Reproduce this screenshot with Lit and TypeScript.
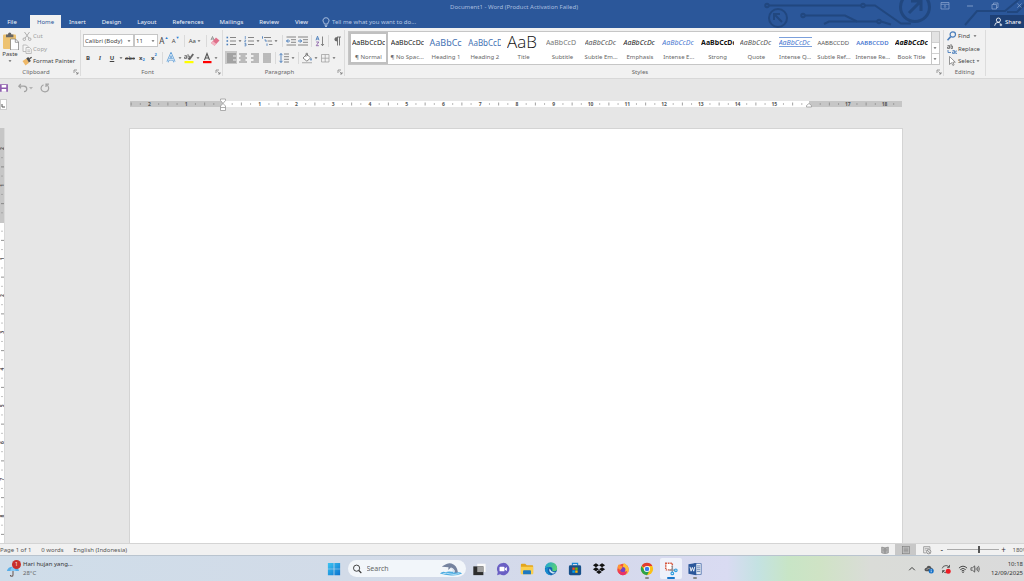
import { LitElement, html, svg, css, TemplateResult } from "lit";
import { customElement, state } from "lit/decorators.js";
import { classMap } from "lit/directives/class-map.js";

const icon = (body: TemplateResult, size = "i12", box = "0 0 12 12") =>
  html`<svg class=${size} viewBox=${box} aria-hidden="true">${body}</svg>`;

const G = "#6b6b6b";
const B = "#4a7ebb";

/* ---------- ribbon glyphs, 12 x 12 grid ---------- */
const lines = (x1: number[], x2: number[], ys: number[], c = G) =>
  ys.map((y, i) => svg`<path d="M${x1[i % x1.length]} ${y}H${x2[i % x2.length]}" stroke=${c} stroke-width="0.8"/>`);

const I = {
  cut: svg`<g fill="none" stroke="#a8a8a8" stroke-width="0.9"><path d="M3.5 2L8 8.3M8.5 2L4 8.3"/><circle cx="3.3" cy="9.2" r="1.3"/><circle cx="8.7" cy="9.2" r="1.3"/></g>`,
  copy: svg`<g fill="#f6f6f6" stroke="#b0b0b0" stroke-width="0.8"><path d="M2 2h3.5l1.5 1.5v5h-5z"/><path d="M5 4.5h3.5l1.8 1.7v4.3h-5.300z"/><path d="M6.300 7h2.700M6.300 8.700h2.700"/></g>`,
  painter: svg`<path d="M1.500 6l4-2.500 2.500 4.200-3.500 2.800z" fill="#eeb868"/><path d="M5.300 3.300l2-1.300 2.600 4-2 1.400z" fill="#4c4c4c"/><path d="M8.300 3.700l2.400-1.500" stroke="#4c4c4c" stroke-width="1.300"/>`,
  paste: svg`<rect x="1" y="2.500" width="13" height="14.500" rx="1" fill="#edc271"/><path d="M4 2.500h2q0-2 1.700-2t1.700 2h2v2.700H4z" fill="#666"/><path d="M8.500 7h5l3 3v8h-8z" fill="#fff" stroke="#777" stroke-width="0.700"/><path d="M13.300 7v3.300h3.200" fill="none" stroke="#777" stroke-width="0.700"/>`,
  eraser: svg`<path d="M2 8l5-5.500 3.500 3-5 5.200z" fill="#e0708a"/><path d="M2 8l1.800-2 3.600 3-1.900 1.700z" fill="#f3b4c2"/><path d="M2 5l1.500-3.500L5 5M2.500 4h2" stroke="#666" stroke-width="0.600" fill="none"/>`,
  bullets: svg`${[2.5, 6, 9.500].map((y) => svg`<rect x="1.500" y=${y - 0.8} width="1.600" height="1.600" fill=${B}/>`)}${lines([5], [11], [2.5, 6, 9.500])}`,
  numbers: svg`<path d="M2.300 1v3M1.500 5.200h1.500l-1.500 1.700h1.500M1.500 8.500h1.500v2.400h-1.500M1.700 9.700h1.300" stroke=${B} stroke-width="0.700" fill="none"/>${lines([5], [11], [2.5, 6, 9.500])}`,
  multi: svg`<path d="M1.500 1.300v2.400M3.500 5h1.500v2M6 8.500v2.300" stroke=${B} stroke-width="0.900" fill="none"/>${lines([3, 6.500, 8], [10, 11, 11.500], [2.5, 6, 9.500])}`,
  outdent: svg`${lines([1.500, 6, 6, 1.500], [11, 11, 11, 11], [2, 4.700, 7.300, 10])}<path d="M5 6H1.500M3.200 4.300L1.500 6l1.700 1.700" stroke=${B} stroke-width="1" fill="none"/>`,
  indent: svg`${lines([1, 6, 6, 1], [11, 11, 11, 11], [2, 4.700, 7.300, 10])}<path d="M1 6h3.700M3 4.300L4.700 6 3 7.700" stroke=${B} stroke-width="1" fill="none"/>`,
  sort: svg`<path d="M2 5.300L3.500 1.200 5 5.300M2.500 4h2" stroke=${B} stroke-width="0.900" fill="none"/><path d="M2.200 7h2.600l-2.600 3.700h2.700" stroke="#8b62a8" stroke-width="0.900" fill="none"/><path d="M8.500 1.500v9M7 9l1.500 1.700L10 9" stroke=${G} stroke-width="0.800" fill="none"/>`,
  pilcrow: svg`<path d="M6 2h4M6.500 2v8.500M8.500 2v8.500" stroke=${G} stroke-width="0.900"/><path d="M6.500 2Q3.500 2 3.500 4.200T6.500 6.400z" fill=${G}/>`,
  left: svg`${lines([2, 2], [11, 8], [2, 4, 6, 8, 10])}`,
  center: svg`${lines([2, 3.500], [10, 8.500], [2, 4, 6, 8, 10])}`,
  right: svg`${lines([2, 4.500], [10, 10], [2, 4, 6, 8, 10])}`,
  justify: svg`${lines([2], [10], [2, 4, 6, 8, 10])}`,
  spacing: svg`${lines([6], [11], [2, 4.700, 7.300, 10])}<path d="M3 1.500v9M1.500 3.200L3 1.500l1.500 1.700M1.500 8.800L3 10.500l1.500-1.700" stroke=${B} stroke-width="0.900" fill="none"/>`,
  shading: svg`<path d="M2 6l3.800-3.800 3.800 3.700-3.700 3.300z" fill="#fff" stroke=${G} stroke-width="0.800"/><path d="M5 5V1.300h1.500V4" stroke=${G} stroke-width="0.700" fill="none"/><path d="M10 5.500q1.500 2.500 0 3.200-1.400-.7 0-3.200z" fill=${B}/><path d="M1 10.700h10" stroke="#b5b5b5" stroke-width="1.200"/>`,
  borders: svg`<path d="M2.500 2.500h7.500v7.500h-7.500zM6.200 2.500v7.500M2.500 6.200h7.500" fill="none" stroke="#999" stroke-width="0.700"/>`,
  find: svg`<circle cx="6.800" cy="4.500" r="2.700" fill="none" stroke=${B} stroke-width="1.200"/><path d="M4.700 6.600L1.500 10.200" stroke=${B} stroke-width="1.600"/>`,
  select: svg`<path d="M3.500 1.500v8l2-1.800 1.400 2.800 1.200-.6-1.300-2.700h2.500z" fill="#fff" stroke=${G} stroke-width="0.700"/>`,
  bulb: svg`<path d="M4.300 8Q4.300 7 3.500 6 2.800 5 3 4 3.500 1.700 6 1.700T9 4q.2 1-.5 2-.8 1-.8 2zM4.600 9.300h2.800M5 10.500h2" fill="none" stroke="#c3d2ea" stroke-width="0.800"/>`,
  person: svg`<circle cx="6.500" cy="3.700" r="2.500" fill="none" stroke="#fff" stroke-width="1"/><path d="M2 10.500q.3-4 4-4 2 0 3 1.500M8 9.500h3M9.500 8v3" fill="none" stroke="#fff" stroke-width="1"/>`,
  save: svg`<path d="M0 1.500h9.500v9H0z" fill="#8e5cae"/><path d="M2 2.500h5.500v3H2zM2 7.300h5.500v3.200H2z" fill="#fff"/>`,
  undo: svg`<path d="M3.800 2L1.800 4.200 4 6.300M2 4.200h5q2.800.3 2.800 2.700T7 9.600" fill="none" stroke="#a3a3a3" stroke-width="1.200"/>`,
  redo: svg`<path d="M4.500 2.700Q2 4 2 6.300 2.400 9.800 6 9.900 9.600 9.500 9.700 6 9.500 3.600 7.500 2.700M7 5V2.200h3" fill="none" stroke="#a3a3a3" stroke-width="1.200"/>`,
  read: svg`<path d="M2 2.500l3.700.8v7L2 9.500zM10 2.500l-3.700.8v7l3.700-.8z" fill="#b8b8b8" stroke="#777" stroke-width="0.700"/><path d="M3 5h2M3 7h2M7 5h2M7 7h2" stroke="#666" stroke-width="0.500"/>`,
  print: svg`<rect x="2" y="2" width="8" height="8.500" fill="#c3c3c3" stroke="#777" stroke-width="0.700"/>${lines([3.200], [8.800], [3.700, 5.200, 6.700, 8.200], "#888")}`,
  web: svg`<path d="M2 2h7.500v3.500M2 2v7.500h3" fill="none" stroke="#888" stroke-width="0.900"/><path d="M3.300 4h5M3.300 6h2" stroke="#888" stroke-width="0.800"/><circle cx="8" cy="8" r="2.700" fill="#ddd" stroke="#777" stroke-width="0.800"/><path d="M6 6l4 4" stroke="#777" stroke-width="0.700"/>`,
};

/* ---------- taskbar glyphs, 16 x 16 grid ---------- */
const T = {
  start: svg`<defs><linearGradient id="ws" x1="0" y1="0" x2="1" y2="1"><stop offset="0" stop-color="#3ec5f2"/><stop offset="1" stop-color="#0a73cf"/></linearGradient></defs><path d="M1 1h6.600v6.600H1zM8.400 1H15v6.600H8.400zM1 8.400h6.600V15H1zM8.400 8.400H15V15H8.400z" fill="url(#ws)"/>`,
  tasks: svg`<rect x="6" y="2" width="9.500" height="9.500" fill="#fafafa"/><rect x="1.500" y="5" width="11.500" height="10" fill="#2d2d2d"/><path d="M6 5h7v6.500H6z" fill="#a3a3a3"/>`,
  chat: svg`<path d="M8 1a7 7 0 1 1-3.300 13L1.300 15l.7-3.500A7 7 0 0 1 8 1z" fill="#6a5fc4"/><rect x="4" y="5.300" width="5.700" height="5.400" rx="1" fill="#fff"/><path d="M10.200 7.300l2.200-1.500v4.500l-2.200-1.500z" fill="#fff"/>`,
  folder: svg`<path d="M1 3q0-1 1-1h4l1.700 1.700H14q1 0 1 1V13H1z" fill="#e3a51c"/><path d="M1 5.500h14V13q0 1-1 1H2q-1 0-1-1z" fill="#fbd04e"/><path d="M3.500 10.500q0-1 1-1h7q1 0 1 1V14h-9z" fill="#1d78c1"/>`,
  edge: svg`<defs><linearGradient id="eg" x1="0" y1="0" x2="1" y2="0.300"><stop offset="0" stop-color="#1ca0dc"/><stop offset="1" stop-color="#58d176"/></linearGradient></defs><circle cx="8" cy="8" r="7" fill="#1262b0"/><path d="M1 7.500A7 7 0 0 1 15 7q.2 3.500-3.500 3.500-2.500 0-2-1.500Q10 6 6.800 5.700 3 5.500 1 7.500z" fill="url(#eg)"/><path d="M6.500 7.500q-1.800 4 3 5.500 2.500.5 4.300-.8-2-.2-3.300-.8-3-1-4-3.900z" fill="#d5e8f4"/><path d="M6.500 6q-3 1.500-2 5 1 3.300 4.500 4Q2.300 15.200 1 9 2 6 6.500 6z" fill="#178bce"/>`,
  store: svg`<path d="M5 4V1.500h6V4" fill="none" stroke="#1a8ad6" stroke-width="1.300"/><rect x="1" y="3.700" width="14" height="11.300" rx="1.700" fill="#17508a"/><path d="M5 6.300h2.700V9H5z" fill="#f25022"/><path d="M8.300 6.300H11V9H8.300z" fill="#7fba00"/><path d="M5 9.600h2.700v2.700H5z" fill="#00a4ef"/><path d="M8.300 9.600H11v2.700H8.300z" fill="#ffb900"/>`,
  dropbox: svg`<path d="M4.500 1.500L8 3.800 4.500 6 1 3.800zM11.500 1.500L15 3.800 11.500 6 8 3.800zM4.500 6L8 8.300l-3.500 2.300L1 8.300zM11.500 6L15 8.300l-3.500 2.300L8 8.300zM4.700 11.300L8 9.200l3.300 2.100L8 13.700z" fill="#111"/>`,
  firefox: svg`<circle cx="8" cy="8.500" r="6.500" fill="#f5503a"/><path d="M9 1q5 2.500 5.600 7.500.2 4-3.600 6 .7-4-2-6.500Q7 5 9 1z" fill="#ffc23a"/><circle cx="7.800" cy="8.700" r="3" fill="#7440c2"/><path d="M1.700 6q.5-2.500 2-3.700.3 2 2.800 2.400Q8 5.300 7 7q-1.700.5-1.500 2.200Q3 9 1.700 6z" fill="#ff9537"/><path d="M1.500 9q2 3 6 3t5.500-2.300Q12 15 8 15T1.500 9z" fill="#e8306a"/>`,
  chrome: svg`<circle cx="8" cy="8" r="7" fill="#fbc116"/><path d="M8 8L1.900 4.500A7 7 0 0 1 14.100 4.500L8 4.700z" fill="#e33b2e"/><path d="M1.900 4.500A7 7 0 0 0 8 15l3-5.200H5z" fill="#2ba24c"/><circle cx="8" cy="8" r="3.500" fill="#fff"/><circle cx="8" cy="8" r="2.600" fill="#3b7de9"/>`,
  snip: svg`<rect x="2" y="1.500" width="7.500" height="7.500" fill="#fff" stroke="#d5553c" stroke-width="1.700" stroke-dasharray="1.700 0.900"/><path d="M9.500 4v7.500M6 9.300h7" stroke="#8d949b" stroke-width="1.500"/><circle cx="13.500" cy="9.500" r="1.500" fill="none" stroke="#2f9fe0" stroke-width="1.300"/><circle cx="9.500" cy="13" r="1.500" fill="none" stroke="#2f9fe0" stroke-width="1.300"/>`,
  word: svg`<rect x="7" y="2" width="8" height="12" fill="#fff" stroke="#2b579a" stroke-width="0.800"/><path d="M10 4.500h4M10 6.700h4M10 8.900h4M10 11.100h4" stroke="#2b579a" stroke-width="0.900"/><path d="M0.500 2.500L9.500 1v14L0.500 13.500z" fill="#2b579a"/><path d="M2.300 5.500l1.200 5 1.500-4.300 1.500 4.300 1.200-5" fill="none" stroke="#fff" stroke-width="1"/>`,
  weather: svg`<path d="M1 8Q2 3 8 3t7 5z" fill="#58aee8"/><path d="M5 8Q5.500 3.500 8 3q2.500.5 3 5z" fill="#86c9f5"/><path d="M8 8v4.500q0 1.500-1.500 1.500T5 12.500" fill="none" stroke="#6c5a55" stroke-width="1.200"/>`,
  up: svg`<path d="M3.500 10L8 5.500l4.500 4.500" fill="none" stroke="#333" stroke-width="1.500"/>`,
  cloud: svg`<path d="M3 11.500Q.5 11 .8 8.500 1.500 6 4 6 5 2.500 8 2.700q3.500.3 4 3.800Q15 7 15 9.500t-2.500 2z" fill="#555"/><path d="M4 9q3-3 6-1" stroke="#ccc" fill="none"/><circle cx="11.500" cy="11" r="4" fill="#1471c9"/><path d="M11.500 10.300v3M11.500 8.300v1.200" stroke="#fff" stroke-width="1.200"/>`,
  sync: svg`<path d="M2 7q1-4.500 6-4.500 3 0 5 2.500M13.500 1.500V5.300H9.700M2.500 10.500v3.800M2.500 10.500h3.500M3 11q2 3 5 3" fill="none" stroke="#333" stroke-width="1.200"/><circle cx="11.500" cy="11.500" r="4" fill="#ed1c24"/>`,
  wifi: svg`<path d="M1.500 6.500Q8 0.500 14.500 6.500M3.700 9Q8 5 12.300 9M5.800 11.200Q8 9.200 10.200 11.200" fill="none" stroke="#333" stroke-width="1.400"/><circle cx="8" cy="13" r="1.200" fill="#333"/>`,
  volume: svg`<path d="M1.500 6H4l3.500-3v10L4 10H1.500z" fill="none" stroke="#333" stroke-width="1.100"/><path d="M9.500 6q1.200 2 0 4M11.500 4.500q2.300 3.500 0 7M13.500 3q3 5 0 10" fill="none" stroke="#333" stroke-width="1"/>`,
};

const TABS = ["Home", "Insert", "Design", "Layout", "References", "Mailings", "Review", "View"];

const STYLES: [string, string, string][] = [
  ["AaBbCcDc", "¶ Normal", ""],
  ["AaBbCcDc", "¶ No Spac...", ""],
  ["AaBbCc", "Heading 1", "h1"],
  ["AaBbCcD", "Heading 2", "h2"],
  ["AaB", "Title", "title"],
  ["AaBbCcD", "Subtitle", "sub"],
  ["AaBbCcDc", "Subtle Em...", "it grey"],
  ["AaBbCcDc", "Emphasis", "it"],
  ["AaBbCcDc", "Intense E...", "it blue"],
  ["AaBbCcDc", "Strong", "bold"],
  ["AaBbCcDc", "Quote", "it grey"],
  ["AaBbCcDc", "Intense Q...", "it blue ruled"],
  ["AABBCCDD", "Subtle Ref...", "caps grey"],
  ["AABBCCDD", "Intense Re...", "caps blue strong"],
  ["AaBbCcDc", "Book Title", "it bold"],
];

const APPS: [string, TemplateResult, string][] = [
  ["Task view", T.tasks, ""],
  ["Chat", T.chat, ""],
  ["File Explorer", T.folder, ""],
  ["Edge", T.edge, ""],
  ["Store", T.store, ""],
  ["Dropbox", T.dropbox, ""],
  ["Firefox", T.firefox, ""],
  ["Chrome", T.chrome, "open"],
  ["Snipping Tool", T.snip, "active"],
  ["Word", T.word, "open"],
];

const reset = css`
  :host, * { box-sizing: border-box; }
  button, input, select, textarea {
    font: inherit; color: inherit; background: none; border: 0; padding: 0; margin: 0;
    border-radius: 0; outline: 0; appearance: none; min-width: 0;
  }
  button { display: flex; align-items: center; justify-content: center; white-space: nowrap; }
  svg { display: block; flex: none; }
  .i12 { width: 12px; height: 12px; }
  .i10 { width: 10px; height: 10px; }
`;

@customElement("word-titlebar")
class WordTitlebar extends LitElement {
  @state() tab = "Home";
  static styles = [reset, css`
    :host { display: block; position: relative; background: #2b579a; color: #fff; overflow: hidden; }
    .art { position: absolute; right: 0; top: 0; width: 264px; height: 28px; }
    .top { display: flex; height: 14px; align-items: center; justify-content: center; color: #a9bedf; position: relative; }
    .title { padding-left: 4px; line-height: 12px; }
    .win { position: absolute; right: 0; top: 0; display: flex; gap: 13px; }
    .tabs { display: flex; height: 14px; position: relative; align-items: stretch; padding-top: 1px; }
    .tabs button { padding: 0 8px; color: #f0f4fb; }
    .tabs .file { width: 30px; padding: 0 6px 0 0; }
    .tabs .on { background: #f1f1f1; color: #2b579a; padding: 0 7px; }
    .tell { display: flex; align-items: center; color: #b8c9e5; margin-left: 4px; flex: 1; }
    .tell input { width: 100px; }
    .tell input::placeholder { color: #b8c9e5; opacity: 1; }
    .tabs .share { background: #1e4075; color: #fff; padding: 0 3px; width: 34px; gap: 2px; }
  `];
  render() {
    return html`
      <svg class="art" viewBox="0 0 264 28" aria-hidden="true">
        <g fill="none" stroke="#21477f" stroke-width="2">
          <circle cx="18" cy="18" r="9"/><path d="M22 22l-7-7M14 20v-6h6"/>
          <circle cx="7" cy="5.500" r="1.700"/><path d="M9 5.500h92M105 5.500h10l26 18h10"/><circle cx="103" cy="5.500" r="1.700"/>
          <circle cx="43" cy="15.500" r="1.700"/><path d="M45 15.500h40l12 6h20"/><circle cx="119" cy="21.500" r="1.700"/><path d="M64 24l5-2.500h28M121 21.500l10 3"/>
          <circle cx="155" cy="7" r="14.500" stroke-width="3"/><path d="M149 13l12-12M151 1h10v10" stroke-width="3"/>
          <path d="M205 25l12-14h28l17-14M247 12h10l8-8"/>
        </g>
      </svg>
      <div class="top">
        <span class="title">Document1 - Word (Product Activation Failed)</span>
        <div class="win">
          <button aria-label="Ribbon display options">${icon(svg`<path d="M2 2.500h8v6.500H2zM2 4.300h8M6 8V5.500M5 6.500l1-1 1 1" fill="none" stroke="#8fa9d2" stroke-width="0.700"/>`)}</button>
          <button aria-label="Minimize">${icon(svg`<path d="M3 6h6" stroke="#8fa9d2" stroke-width="0.800"/>`)}</button>
          <button aria-label="Restore">${icon(svg`<path d="M3 4.500h4.500V9H3zM4.500 4.500V3H9v4.500H7.500" fill="none" stroke="#8fa9d2" stroke-width="0.700"/>`)}</button>
          <button aria-label="Close">${icon(svg`<path d="M4 3l5 5M9 3L4 8" stroke="#8fa9d2" stroke-width="0.800"/>`, "i10")}</button>
        </div>
      </div>
      <nav class="tabs">
        <button class="file">File</button>
        ${TABS.map((t) => html`<button class=${classMap({ on: t === this.tab })} @click=${() => (this.tab = t)}>${t}</button>`)}
        <label class="tell">${icon(I.bulb, "i12")}<input aria-label="Tell me" placeholder="Tell me what you want to do..." /></label>
        <button class="share">${icon(I.person, "i10")}Share</button>
      </nav>`;
  }
}

@customElement("word-ribbon")
class WordRibbon extends LitElement {
  @state() picked = 0;
  static styles = [reset, css`
    :host { display: flex; height: 51px; background: #f1f1f1; border-bottom: 1px solid #d8d8d8; color: #444; padding: 2px 0; }
    .group { display: flex; flex-direction: column; border-right: 1px solid #dcdcdc; flex: none; }
    .foot { display: flex; align-items: center; height: 9px; color: #666; }
    .foot span { flex: 1; text-align: center; }
    .foot button { width: 8px; height: 8px; }
    .body { flex: 1; display: flex; min-height: 0; }
    .clip { width: 81px; }
    .paste { width: 20px; flex-direction: column; justify-content: flex-start; padding: 2px 0 0 0; line-height: 8px; }
    .paste svg { width: 17px; height: 18px; }
    .paste .dd { width: 6px; height: 6px; }
    .stack { display: flex; flex-direction: column; padding: 0 1px; justify-content: space-between; }
    .stack button { justify-content: flex-start; height: 12px; }
    .off { color: #a0a0a0; }
    .rows { flex-direction: column; padding: 4px 1px 0 1px; gap: 4px; }
    .row { display: flex; align-items: center; height: 13px; }
    .row button { width: 12px; height: 13px; }
    .row .ar { width: 6px; }
    .row .wide { width: 18px; }
    .row .on { background: #c8c8c8; }
    .font { width: 142px; }
    .para { width: 122px; }
    .para .rows { padding-left: 2px; }
    .sep { width: 1px; height: 12px; background: #dadada; margin: 0 2px; }
    .sep.far { margin: 0 2px 0 3px; }
    .combo { display: flex; align-items: center; height: 13px; background: #fff; border: 1px solid #c6c6c6; position: relative; flex: none; }
    .combo select { width: 100%; height: 11px; padding: 0 8px 0 1px; }
    .combo .dd { position: absolute; right: 1px; top: 3px; pointer-events: none; }
    .face { width: 51px; margin-left: 1px; } .size { width: 24px; }
    .dd { width: 6px; height: 6px; }
    .big { font-size: 8px; } .b { font-weight: 700; } .i { font-style: italic; font-family: "Liberation Serif", serif; font-weight: 700; }
    .u { text-decoration: underline; font-weight: 700; } .s { text-decoration: line-through; }
    sup, sub { font-size: 4px; line-height: 4px; color: #2b7cd3; }
    sup { align-self: flex-start; padding-top: 2px; } sub { align-self: flex-end; padding-bottom: 2px; }
    .sty { flex: 1; min-width: 0; }
    .sty .body { padding: 1px 3px 4px; }
    .gallery { display: flex; flex: 1; min-width: 0; height: 34px; background: #fff; border: 1px solid #c6c6c6; }
    .cell { flex: 1; flex-direction: column; overflow: hidden; padding: 1px; color: #666; justify-content: space-between; }
    .cell.sel { outline: 2px solid #c0c0c0; outline-offset: -2px; }
    .prev { width: 33px; height: 20px; line-height: 20px; overflow: hidden; text-align: left; font-size: 7px; color: #222; white-space: nowrap; }
    .name { line-height: 12px; }
    .h1 { font-size: 9px; color: #4472b4; } .h2 { font-size: 8px; color: #4472b4; }
    .title { font-size: 17px; color: #111; line-height: 17px; font-weight: 300; font-family: "Open Sans", sans-serif; }
    .sub { color: #777; }
    .it { font-style: italic; } .grey { color: #555; } .blue { color: #4a78d0; } .bold { font-weight: 700; color: #111; } .strong { font-weight: 600; }
    .caps { font-size: 6px; }
    .ruled { border: solid #7ba0dc; border-width: 1px 0; height: 12px; line-height: 10px; margin: 4px 0; }
    .scroll { width: 8px; display: flex; flex-direction: column; border-left: 1px solid #c6c6c6; }
    .scroll button { flex: 1; border-bottom: 1px solid #d0d0d0; }
    .scroll button:first-child { background: #e3e3e3; }
    .scroll button:last-child { border: 0; }
    .edit { width: 42px; } .edit .stack { padding: 0 2px; }
    .rest { width: 38px; flex: none; }
  `];
  dd() { return html`<svg class="dd" viewBox="0 0 6 6" aria-hidden="true"><path d="M1.500 2.200h3L3 3.900z" fill="#666"/></svg>`; }
  ar(l: string) { return html`<button class="ar" aria-label="${l} options">${this.dd()}</button>`; }
  bt(l: string, b: TemplateResult, c = "") { return html`<button class=${c} aria-label=${l}>${icon(b)}</button>`; }
  foot(l: string, launch = true) {
    return html`<div class="foot"><span>${l}</span>${launch
      ? html`<button aria-label="${l} settings"><svg width="6" height="6" viewBox="0 0 6 6"><path d="M1 4V1h3M2.500 2.500L5 5M5 3v2H3" fill="none" stroke="#777" stroke-width="0.700"/></svg></button>` : ""}</div>`;
  }
  render() {
    return html`
      <section class="group clip">
        <div class="body">
          <button class="paste">${icon(I.paste, "", "0 0 17 18")}<span>Paste</span>${this.dd()}</button>
          <div class="stack">
            <button class="off">${icon(I.cut)}Cut</button>
            <button class="off">${icon(I.copy)}Copy</button>
            <button>${icon(I.painter)}Format Painter</button>
          </div>
        </div>${this.foot("Clipboard")}
      </section>
      <section class="group font">
        <div class="body rows">
          <div class="row">
            <label class="combo face"><select aria-label="Font"><option>Calibri (Body)</option></select>${this.dd()}</label>
            <label class="combo size"><select aria-label="Font size"><option>11</option></select>${this.dd()}</label>
            <button class="big" aria-label="Grow font">A<sup>▲</sup></button>
            <button aria-label="Shrink font">A<sup>▼</sup></button>
            <i class="sep"></i>
            <button class="wide" aria-label="Change case">Aa${this.dd()}</button>
            <i class="sep"></i>
            ${this.bt("Clear formatting", I.eraser)}
          </div>
          <div class="row">
            <button class="b">B</button><button class="i">I</button><button class="u">U</button>${this.ar("Underline")}
            <button class="s">abc</button>
            <button class="b">x<sub>2</sub></button><button class="b">x<sup>2</sup></button>
            <i class="sep"></i>
            ${this.bt("Text effects", svg`<path d="M2.500 10L6 2l3.500 8M4 7.500h4" fill="none" stroke="#5b9bd5" stroke-width="2.200"/><path d="M2.500 10L6 2l3.500 8M4 7.500h4" fill="none" stroke="#fff" stroke-width="0.700"/>`)}${this.ar("Effects")}
            ${this.bt("Highlight", svg`<rect x="1.500" y="9" width="9" height="2.200" fill="#ff0"/><path d="M5 7.500L9.500 1.500l1.500 1L7 8z" fill="#666"/><path d="M1.500 3.500h2v3h-2v-1.500h2M5 2v4.500h1.500V4H5" fill="none" stroke="#555" stroke-width="0.700"/>`)}${this.ar("Highlight")}
            ${this.bt("Font colour", svg`<path d="M3.500 8L6 1.500 8.500 8M4.300 6h3.400" fill="none" stroke="#555" stroke-width="1.100"/><rect x="2" y="9" width="8.500" height="2.200" fill="#f00"/>`)}${this.ar("Colour")}
          </div>
        </div>${this.foot("Font")}
      </section>
      <section class="group para">
        <div class="body rows">
          <div class="row">
            ${this.bt("Bullets", I.bullets)}${this.ar("Bullets")}${this.bt("Numbering", I.numbers)}${this.ar("Numbering")}${this.bt("Multilevel list", I.multi)}${this.ar("Multilevel")}
            <i class="sep far"></i>${this.bt("Decrease indent", I.outdent)}${this.bt("Increase indent", I.indent)}
            <i class="sep"></i>${this.bt("Sort", I.sort)}<i class="sep"></i>${this.bt("Show marks", I.pilcrow)}
          </div>
          <div class="row">
            ${this.bt("Align left", I.left, "on")}${this.bt("Center", I.center)}${this.bt("Align right", I.right)}${this.bt("Justify", I.justify)}
            <i class="sep"></i>${this.bt("Line spacing", I.spacing)}${this.ar("Spacing")}
            <i class="sep"></i>${this.bt("Shading", I.shading)}${this.ar("Shading")}${this.bt("Borders", I.borders)}${this.ar("Borders")}
          </div>
        </div>${this.foot("Paragraph")}
      </section>
      <section class="group sty">
        <div class="body"><div class="gallery">
          ${STYLES.map(([p, n, c], i) => html`<button class=${classMap({ cell: true, sel: i === this.picked })} @click=${() => (this.picked = i)}>
            <span class="prev ${c}">${p}</span><span class="name">${n}</span></button>`)}
          <div class="scroll"><button aria-label="Up"></button><button aria-label="Down">${this.dd()}</button><button aria-label="More">${this.dd()}</button></div>
        </div></div>${this.foot("Styles")}
      </section>
      <section class="group edit">
        <div class="body stack">
          <button>${icon(I.find)}Find&nbsp;${this.dd()}</button>
          <button>${icon(svg`<path d="M1.500 2.500h2v3h-2V4h2M5 1v4.500h1.500V3H5" fill="none" stroke="#666" stroke-width="0.800"/><path d="M2 7v2.500h3" fill="none" stroke="#4a7ebb" stroke-width="0.900"/><path d="M6.500 7.500h2v3h-2V9h2M11 8H9.700v2.500H11" fill="none" stroke="#4a7ebb" stroke-width="0.800"/>`)}Replace</button>
          <button>${icon(I.select)}Select${this.dd()}</button>
        </div>${this.foot("Editing", false)}
      </section>
      <div class="rest"></div>`;
  }
}

@customElement("word-workspace")
class WordWorkspace extends LitElement {
  static styles = [reset, css`
    :host { display: flex; flex-direction: column; flex: 1; min-height: 0; background: #e6e6e6; color: #444; }
    .quick { display: flex; align-items: center; height: 18px; }
    .quick .save { width: 10px; margin-right: 7px; justify-content: flex-start; }
    .quick .redo { margin-left: 6px; }
    .top { display: flex; height: 20px; padding-top: 2px; }
    .corner { width: 7px; height: 11px; background: #fff; border: 1px solid #ccc; }
    .hr { flex: 1; padding: 0 122px 0 123px; }
    .hr svg { width: 100%; height: 16px; overflow: visible; }
    .num { font: 700 5px "Open Sans", sans-serif; fill: #555; text-anchor: middle; }
    .main { display: flex; flex: 1; min-height: 0; padding-top: 11px; }
    .vr { width: 5px; overflow: hidden; flex: none; border-right: 1px solid #d9d9d9; }
    .sheet { flex: 1; display: flex; padding: 0 121px 0 124px; }
    textarea { flex: 1; background: #fff; border: 1px solid #d4d4d4; border-bottom: 0; resize: none; padding: 92px; font-size: 20px; }
  `];
  ticks(zero: number, from: number, to: number, skip: number[], mk: (p: number, kind: number, n: number) => TemplateResult) {
    const out: TemplateResult[] = [];
    for (let q = from; q <= to; q++) {
      if (q === 0 || skip.includes(q)) continue;
      const kind = q % 4 === 0 ? 2 : q % 2 === 0 ? 1 : 0;
      out.push(mk(zero + (q * 36.75) / 4, kind, Math.abs(q / 4)));
    }
    return out;
  }
  render() {
    return html`
      <div class="quick">
        <button class="save" aria-label="Save">${icon(I.save, "i10")}</button>
        <button aria-label="Undo">${icon(I.undo)}</button>
        <svg width="4" height="6" viewBox="0 0 4 6"><path d="M0 2h4L2 4.500z" fill="#b5b5b5"/></svg>
        <button class="redo" aria-label="Redo">${icon(I.redo)}</button>
      </div>
      <div class="top">
        <div class="corner"><svg width="5" height="9" viewBox="0 0 5 9"><path d="M1 4v3h3" fill="none" stroke="#555"/></svg></div>
        <div class="hr"><svg viewBox="0 0 772 16">
          <rect x="0" y="2" width="772" height="6" fill="#c6c6c6"/><rect x="93" y="2" width="586" height="6" fill="#fff"/>
          ${this.ticks(93, -10, 73, [64], (p, k, n) => k === 2
            ? svg`<text class="num" x=${p} y="7">${n}</text>`
            : k === 1 ? svg`<path d="M${p} 3.500v3" stroke="#888" stroke-width="0.800"/>` : svg`<rect x=${p - 0.5} y="4.500" width="1" height="1" fill="#777"/>`)}
          <g fill="#fff" stroke="#999" stroke-width="0.800"><path d="M90.500 0h5v1.500L93 4.500 90.500 1.500zM93 4.500l2.500 2.500v4.500h-5V7zM90.500 8.500h5"/><path d="M679 4.500l2.500 2v1.500h-5V6.500z"/></g>
        </svg></div>
      </div>
      <div class="main">
        <div class="vr"><svg width="4" height="440" viewBox="0 0 4 440">
          <rect width="4" height="440" fill="#fff"/><rect width="4" height="95" fill="#c6c6c6"/>
          ${this.ticks(94, -8, 37, [], (p, k, n) => k === 2
            ? svg`<text class="num" transform="translate(4 ${p}) rotate(-90)">${n}</text>`
            : k === 1 ? svg`<path d="M1 ${p}h3" stroke="#777" stroke-width="0.800"/>` : svg`<rect x="1.500" y=${p - 0.5} width="1" height="1" fill="#888"/>`)}
        </svg></div>
        <div class="sheet"><textarea aria-label="Document"></textarea></div>
      </div>`;
  }
}

@customElement("word-status")
class WordStatus extends LitElement {
  static styles = [reset, css`
    :host { display: flex; height: 13px; align-items: center; background: #f1f1f1; border-top: 1px solid #d4d4d4; border-bottom: 1px solid #b9c4cf; color: #555; white-space: nowrap; overflow: hidden; }
    .info { display: flex; gap: 10px; flex: 1; }
    .views { display: flex; }
    .views button { width: 21px; height: 12px; }
    .views .on { background: #c8c8c8; }
    .zoom { display: flex; align-items: center; gap: 2px; width: 87px; padding-left: 2px; }
    .zoom button { width: 6px; font-size: 8px; line-height: 10px; color: #333; }
    input { width: 54px; height: 8px; background: linear-gradient(#aaa, #aaa) center / 100% 1px no-repeat; }
    input::-webkit-slider-thumb { appearance: none; width: 2px; height: 7px; background: #555; }
    .pct { width: 12px; overflow: hidden; margin-left: 4px; }
  `];
  render() {
    return html`
      <div class="info"><span>Page 1 of 1</span><span>0 words</span><span>English (Indonesia)</span></div>
      <div class="views"><button aria-label="Read mode">${icon(I.read, "i10")}</button><button class="on" aria-label="Print layout">${icon(I.print, "i10")}</button><button aria-label="Web layout">${icon(I.web, "i10")}</button></div>
      <div class="zoom"><button aria-label="Zoom out">-</button><input type="range" min="0" max="100" value="62" aria-label="Zoom" /><button aria-label="Zoom in">+</button><span class="pct">180%</span></div>`;
  }
}

@customElement("desktop-taskbar")
class DesktopTaskbar extends LitElement {
  static styles = [reset, css`
    :host { display: grid; grid-template-columns: 1fr auto 1fr; height: 25px; align-items: center; color: #333;
      background: linear-gradient(90deg, #cfdde9 0%, #d2dbe8 35%, #d5d9ec 60%, #d9dbf2 71%, #c4e2e2 74%, #c8e5c6 77%, #cfe3c5 80%, #dadcd8 85%, #dadadb 100%); }
    .weather { display: flex; gap: 3px; padding-left: 6px; text-align: left; justify-content: flex-start; line-height: 9px; }
    .pic { position: relative; padding-top: 4px; }
    .pic svg { width: 14px; height: 14px; }
    .badge { position: absolute; right: -1px; top: 0; width: 9px; height: 9px; border-radius: 5px; background: #c9302c; color: #fff; font-size: 5px; line-height: 9px; text-align: center; }
    .deg { color: #666; display: block; }
    .mid { display: flex; align-items: center; padding-left: 6px; }
    .mid button { width: 22px; height: 21px; margin-right: 2px; position: relative; border-radius: 2px; }
    .i14 { width: 14px; height: 14px; }
    .search { display: flex; align-items: center; width: 118px; height: 17px; margin: 0 2px 0 1px; border-radius: 9px; background: #f2f6fa; padding: 0 0 0 4px; font-size: 7px; gap: 5px; }
    .search input { flex: 1; }
    .search input::placeholder { color: #666; opacity: 1; }
    .whale { width: 24px; height: 14px; margin-right: 3px; }
    .mid .active { background: #eef1fa; }
    .open::after, .active::after { content: ""; position: absolute; bottom: 0; left: 9px; width: 4px; height: 2px; border-radius: 1px; background: #888; }
    .active::after { left: 7px; width: 8px; background: #1976c9; }
    .tray { display: flex; align-items: center; justify-content: flex-end; padding-right: 1px; }
    .tray button { width: 17px; }
    .tray .net { width: 12px; }
    .tray .wifi { margin-left: 3px; }
    .clock { line-height: 9px; text-align: right; margin-left: 10px; }
    .clock time { display: block; }
  `];
  render() {
    return html`
      <button class="weather"><span class="pic">${icon(T.weather, "", "0 0 16 16")}<span class="badge">1</span></span>
        <span>Hari hujan yang...<span class="deg">28°C</span></span></button>
      <div class="mid">
        <button aria-label="Start">${icon(T.start, "i14", "0 0 16 16")}</button>
        <label class="search">${icon(svg`<circle cx="5.500" cy="5" r="3.700" fill="none" stroke="#333" stroke-width="1.100"/><path d="M8.200 7.800l3 3" stroke="#333" stroke-width="1.300"/>`, "i10")}
          <input aria-label="Search" placeholder="Search" />
          <svg class="whale" viewBox="0 0 26 15" aria-hidden="true"><path d="M1 12.500q3-3 6-1.500 3-1.500 7-.5 5-.5 6 .5 3-.5 5 1.500-5 2.500-12 2T1 12.500z" fill="#4eade2"/><path d="M3.500 4.500L6.500 3q3-2.500 7-1.500 6 2 7 9.500l-3 .5Q17 7 13 6l-3 2.500.3-3L3.500 5z" fill="#75839f"/><path d="M12.500 6Q16.500 7 17 11l-1.700.5Q15 7.500 12.500 6z" fill="#d7dfec"/><path d="M4 12.800q4-1.500 8 0t10-.3" fill="none" stroke="#d9f0fb" stroke-width="0.800"/></svg>
        </label>
        ${APPS.map(([n, g, c]) => html`<button class=${c} aria-label=${n}>${icon(g, "i14", "0 0 16 16")}</button>`)}
      </div>
      <div class="tray">
        <button aria-label="Hidden icons">${icon(T.up, "i10", "0 0 16 16")}</button>
        <button aria-label="OneDrive">${icon(T.cloud, "i10", "0 0 16 16")}</button>
        <button aria-label="Updates">${icon(T.sync, "i10", "0 0 16 16")}</button>
        <button class="net wifi" aria-label="Wi-Fi">${icon(T.wifi, "i10", "0 0 16 16")}</button>
        <button class="net" aria-label="Volume">${icon(T.volume, "i10", "0 0 16 16")}</button>
        <div class="clock"><time>10:18</time><time>12/09/2025</time></div>
      </div>`;
  }
}

@customElement("app-root")
class AppRoot extends LitElement {
  static styles = css`
    :host { display: flex; flex-direction: column; height: 100vh; overflow: hidden; font: 6px/8px "Noto Sans", "Open Sans", sans-serif; }
  `;
  render() {
    return html`<word-titlebar></word-titlebar><word-ribbon></word-ribbon><word-workspace></word-workspace><word-status></word-status><desktop-taskbar></desktop-taskbar>`;
  }
}
